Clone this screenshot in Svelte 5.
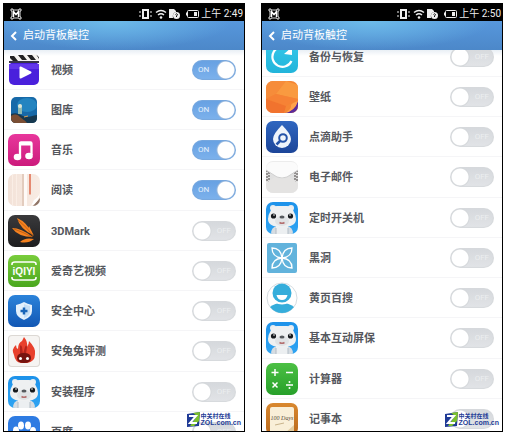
<script>
  // Each phone shows one scroll position of the same settings list
  let phones = $state([
    {
      id: 'a',
      time: '2:49',
      scrolled: false,
      apps: [
        { name: '视频', icon: 'video', on: true },
        { name: '图库', icon: 'gallery', on: true },
        { name: '音乐', icon: 'music', on: true },
        { name: '阅读', icon: 'reader', on: true },
        { name: '3DMark', icon: 'mark', on: false },
        { name: '爱奇艺视频', icon: 'qiyi', on: false },
        { name: '安全中心', icon: 'shield', on: false },
        { name: '安兔兔评测', icon: 'antutu', on: false },
        { name: '安装程序', icon: 'bear', on: false },
        { name: '百度', icon: 'paw', on: false }
      ]
    },
    {
      id: 'b',
      time: '2:50',
      scrolled: true,
      apps: [
        { name: '备份与恢复', icon: 'backup', on: false },
        { name: '壁纸', icon: 'wallpaper', on: false },
        { name: '点滴助手', icon: 'drop', on: false },
        { name: '电子邮件', icon: 'mail', on: false },
        { name: '定时开关机', icon: 'bear', on: false },
        { name: '黑洞', icon: 'hole', on: false },
        { name: '黄页百搜', icon: 'pages', on: false },
        { name: '基本互动屏保', icon: 'bear', on: false },
        { name: '计算器', icon: 'calc', on: false },
        { name: '记事本', icon: 'notes', on: false }
      ]
    }
  ]);
</script>

{#snippet appIcon(kind)}
  <svg class="icon {kind}" viewBox="0 0 32 32" aria-hidden="true">
    {#if kind === 'video'}
      <rect x="1" y="8" width="30" height="23" rx="5" fill="#4a20dc" />
      <path d="M1 10h30v5H1z" fill="#6236ea" />
      <path d="M2 2 30 0 31 6 2 8z" fill="#f4f2ee" />
      <path d="M2 2h4l4 5H5L2 4zM10 1h5l4 5h-5zM19 1h5l4 5h-5zM28 0l3 1v4z" fill="#222" />
      <path d="M1 7h30v2H1z" fill="#38344a" />
      <path d="M12.500 13.500v10L22.500 18.500z" fill="#fff" stroke="#fff" stroke-width="2" stroke-linejoin="round" />
    {:else if kind === 'gallery'}
      <rect x="3" y="3" width="26" height="26" rx="5" fill="#1769a8" />
      <ellipse cx="19" cy="11" rx="10" ry="7" fill="#2484c0" />
      <path d="M3 20c5-2 8 0 12 2s8 0 14-1v3q0 5-5 5H8q-5 0-5-5z" fill="#16384f" />
      <path d="M3 22c5-3 7-1 9 1s5 3 7 6H8q-5 0-5-5z" fill="#7a4e34" />
      <path d="M10 12q2-3 4 0v8h-4z" fill="#8fbab4" />
      <circle cx="12" cy="12" r="2" fill="#dde6d8" />
      <path d="m16 23 4-1" stroke="#e0a050" />
    {:else if kind === 'music'}
      <path d="M12 22V9.500q0-1 1-1h9.500q1 0 1 1V21" fill="none" stroke="#fff" stroke-width="2.300" />
      <path d="M11 8h13v3.500H11z" fill="#fff" />
      <ellipse cx="9.500" cy="23" rx="3.800" ry="3.200" fill="#fff" />
      <ellipse cx="21" cy="22" rx="3.800" ry="3.200" fill="#fff" />
    {:else if kind === 'reader'}
      <path d="M14 0h2v32h-2z" fill="#dcc0b0" opacity=".7" />
      <path d="M16 0h3v32h-3z" fill="#fffaf7" />
      <path d="M8 0h1v32H8zM4 0h1v32H4z" fill="#faeee6" />
      <path d="M21 0h2v20l-1 1-1-1z" fill="#e58a72" />
      <path d="M32 24 25 32h7z" fill="#8f7466" />
      <path d="M32 19q-1 9-9 13l3-6q4-2 6-7z" fill="#fff" />
    {:else if kind === 'mark'}
      <g fill="#f58220">
        <path d="M9 3q10 4 16 17Q12 14 9 3z" />
        <path d="M4 13q9 0 21 9Q10 22 4 13z" />
        <path d="M12 27q5-5 14-3-6 5-14 3z" />
        <path d="m21 11 5 10-6-6z" />
      </g>
      <path d="M10 5q9 7 15 16M6 14q9 3 18 8" fill="none" stroke="#b4550c" stroke-width=".7" />
    {:else if kind === 'qiyi'}
      <g fill="none" stroke="#fff" stroke-width="1.600">
        <path d="M4 10V9q0-2 3-2h18q3 0 3 2v1M4 22v1q0 2 3 2h18q3 0 3-2v-1" />
      </g>
      <text x="16" y="20" text-anchor="middle">iQIYI</text>
    {:else if kind === 'shield'}
      <path d="M16 7q3.500 2 8 3v6q0 6-8 9-8-3-8-9v-6q4.500-1 8-3z" fill="#e3f0fc" />
      <path d="M16 9q3 1.500 6 2v5q0 4.500-6 7z" fill="#c5def5" />
      <path d="M16 12.500v7M12.500 16h7" stroke="#1965b8" stroke-width="2.500" />
    {:else if kind === 'antutu'}
      <path d="M6 20Q3 14 8 10q0 3 2 4 0-6 4-8l2-4q4 5 3 10 2-3 2-6 7 7 6 13 0 8-8 9h-6q-6-1-7-8z" fill="#e8402c" />
      <path d="M12 19V11q1-2 2 1l1 7 2-7q1-3 2 0l-1 7z" fill="#b3231b" />
      <path d="M9 23q0-5 7-5t7 5q0 5-7 5t-7-5z" fill="#76130f" />
      <circle cx="12.500" cy="23.500" r="1.500" fill="#fff" />
      <circle cx="19.500" cy="23.500" r="1.500" fill="#fff" />
    {:else if kind === 'bear'}
      <path d="M5 32q0-7 6-8h10q6 1 6 8z" fill="#d5dce2" />
      <path d="M10 24h12v8H10z" fill="#eceff1" />
      <path d="M10 26v6M22 26v6" stroke="#b2bcc5" />
      <circle cx="7" cy="6" r="3" fill="#e9edf0" />
      <circle cx="25" cy="6" r="3" fill="#e9edf0" />
      <path d="M5 8q1-4 6-4h10q5 0 6 4 3 5 3 9 0 8-14 8T2 17q0-4 3-9z" fill="#eef0f1" />
      <ellipse cx="16" cy="19" rx="7" ry="5" fill="#e0e3e5" />
      <circle cx="7.500" cy="14" r="2.600" fill="#15191d" />
      <circle cx="24.500" cy="14" r="2.600" fill="#15191d" />
      <circle cx="8" cy="13" r=".8" fill="#fff" />
      <circle cx="24" cy="13" r=".8" fill="#fff" />
      <ellipse cx="16" cy="15" rx="2.500" ry="1.600" fill="#55595d" />
      <path d="M13.500 20.500q2.500 1.500 5 0" fill="none" stroke="#b46f6f" stroke-width="1.500" />
    {:else if kind === 'paw'}
      <g fill="#fff">
        <ellipse cx="8" cy="14.500" rx="3" ry="4" />
        <ellipse cx="13" cy="9.500" rx="3" ry="4" />
        <ellipse cx="20" cy="9.500" rx="3" ry="4" />
        <ellipse cx="25" cy="15" rx="3" ry="4" />
        <path d="M16 15q3 0 5 4 5 3 4 7-2 4-9 3-7 1-9-3-1-4 4-7 2-4 5-4z" />
      </g>
    {:else if kind === 'backup'}
      <path d="M22 7.500A10 10 0 1 0 25.500 20" fill="none" stroke="#fff" stroke-width="2.200" />
      <path d="M26 6v8l-8-1z" fill="#fff" />
    {:else if kind === 'wallpaper'}
      <path d="M0 0h20L10 13 0 18z" fill="#f68c3a" />
      <path d="m20 0 12 4v14L10 13z" fill="#f99a40" />
      <path d="m10 13 22 5-12 7L0 18z" fill="#f68235" />
      <path d="m0 18 20 7-2 7H0z" fill="#f1732e" />
      <path d="M32 20v12H19q9-2 13-12z" fill="#5b2b9a" />
      <path d="M32 20q-6 2-7 4 1 4-6 8 10-2 13-12z" fill="#ffa24c" />
    {:else if kind === 'drop'}
      <path d="M16 4q9 9 9 14a9 9 0 0 1-18 0q0-5 9-14z" fill="#eef4fb" />
      <circle cx="17" cy="17" r="3.800" fill="none" stroke="#2453a8" stroke-width="2" />
      <path d="m14 20-3.500 3.500" stroke="#2453a8" stroke-width="2.500" />
    {:else if kind === 'mail'}
      <path d="M0 9v12h32V9z" fill="#e0e0e0" />
      <path d="M1 9v12M3 11v10M31 9v12M29 11v10" stroke="#7b7776" stroke-width="1.500" stroke-dasharray="2 1" />
      <path d="M0 9q0-8 7-8h18q7 0 7 8l-11 7q-5 2-10 0z" fill="#fbfbfb" />
      <path d="m0 9 11 7q5 2 10 0l11-7" fill="none" stroke="#cfcfcf" />
      <path d="m0 22 9-6q7 3 14 0l9 6v10H0z" fill="#e4e3e2" />
    {:else if kind === 'hole'}
      <rect x="1" y="1" width="30" height="30" rx="2" fill="#62b3dc" />
      <g fill="none" stroke="#fff" stroke-width="1.300">
        <path d="M16 16Q6 15 6 6q9 0 10 10zM16 16Q26 15 26 6q-9 0-10 10zM16 16Q6 17 6 26q9 0 10-10zM16 16q10 1 10 10-9 0-10-10z" />
      </g>
    {:else if kind === 'pages'}
      <circle cx="16" cy="16" r="15" fill="#fff" stroke="#d5dce0" />
      <path d="M4 25q5-4 12-4t12 4q-5 6-12 6T4 25z" fill="#35addb" />
      <circle cx="16" cy="12" r="10.500" fill="#fff" />
      <circle cx="16" cy="11" r="9.500" fill="#35addb" />
      <path d="M10.500 13h11q-1 5-5.500 5t-5.500-5z" fill="#fff" />
    {:else if kind === 'calc'}
      <g stroke="#fff" stroke-width="1.500">
        <path d="M9 6v7M5.500 9.500h7M20 9.500h7M6.500 19.500l5 5M11.500 19.500l-5 5M20 22h7" />
      </g>
      <circle cx="23.500" cy="19" r="1" fill="#fff" />
      <circle cx="23.500" cy="25" r="1" fill="#fff" />
    {:else if kind === 'notes'}
      <rect x="4" y="4" width="24" height="27" rx="2" fill="#f9efd8" />
      <text x="16" y="17" text-anchor="middle">100 Days</text>
      <path d="m9 22 9-2" stroke="#c9b48c" />
      <path d="m18 31 10-9v9z" fill="#e3cda0" />
    {/if}
  </svg>
{/snippet}

<main class="page">
  {#each phones as phone (phone.id)}
    <section class="phone">
      <div class="status">
        <svg class="notice" viewBox="0 0 12 12" aria-hidden="true">
          <path d="M1 1h2v1h6V1h2v2h-1v6h1v2H9v-1H3v1H1V9h1V3H1z" fill="none" stroke="#ddd" />
          <path d="M3.500 9V3.500L6 6.500l2.500-3V9" fill="none" stroke="#fff" stroke-width="1.500" />
        </svg>
        <svg class="glyphs" viewBox="0 0 60 12" aria-hidden="true">
          <g fill="none" stroke="#eee">
            <rect x="4" y="2" width="5" height="8" stroke-width="2" />
            <path d="M1 3v2M1 7v2M12 3v2M12 7v2" />
            <path d="M17 4.500q5-4 10 0M19 7q3-2.500 6 0" stroke-width="1.500" />
            <rect x="48.500" y="2.500" width="11" height="7" rx="1" />
          </g>
          <circle cx="22" cy="9.500" r="1.300" fill="#eee" />
          <path d="M30 1h5l2 2v1q-4 1-3 6h-4z" fill="#eee" />
          <circle cx="37.500" cy="7.500" r="3.500" fill="#eee" />
          <path d="M36.500 6.500q1-1.500 2 0l-1 1.500v1" fill="none" stroke="#111" />
          <path d="M47 4.500h1v3h-1zM55 4h3v4h-3z" fill="#eee" />
        </svg>
        <span class="time">上午 {phone.time}</span>
      </div>

      <header class="title-bar">
        <button class="back" type="button">
          <svg viewBox="0 0 8 10" aria-hidden="true">
            <path d="M6 1 2 5l4 4" fill="none" stroke="#fff" stroke-width="2" />
          </svg>
          启动背板触控
        </button>
      </header>

      <div class="list" class:scrolled={phone.scrolled}>
        {#each phone.apps as app, i (i)}
          <label class="row">
            {@render appIcon(app.icon)}
            <span class="name">{app.name}</span>
            <span class="switch" class:on={app.on}>
              <input type="checkbox" bind:checked={app.on} />
              <span class="word" aria-hidden="true">{app.on ? 'ON' : 'OFF'}</span>
            </span>
          </label>
        {/each}
      </div>

      <!-- site stamp, lies over the last row -->
      <div class="stamp">
        <svg viewBox="0 0 15 15" aria-hidden="true">
          <path d="M1 2 14 0 13 14 1 15z" fill="#203b96" />
          <path d="M7 1 14 0l-1 9-5 5H4l7-10z" fill="#7cc12c" />
          <path d="M3 4h7L4 11h7" fill="none" stroke="#fff" stroke-width="2" />
        </svg>
        <div class="stamp-text">
          <span class="stamp-cn">中关村在线</span>
          <span class="stamp-url">ZOL.com.cn</span>
        </div>
      </div>
    </section>
  {/each}
</main>

<style>
  :global(body) { background: #fff; }

  .page {
    display: flex; gap: 16px; height: 100vh; padding: 3px; box-sizing: border-box;
    font-family: Roboto, "Noto Sans CJK SC", sans-serif; font-size: 11px; color: #55575d;
  }

  .phone {
    position: relative; flex: 1; min-width: 0; display: flex; flex-direction: column;
    box-sizing: border-box; border: 1px solid #000; background: #fff; overflow: hidden;
  }

  /* STATUS BAR */
  .status { flex: none; display: flex; align-items: center; height: 17px; padding: 2px 1px 0 6px; box-sizing: border-box; background: #000; color: #eee; }
  .notice { width: 12px; height: 12px; margin-right: auto; }
  .glyphs { width: 60px; height: 12px; margin-right: 2px; }
  .time { font-size: 10px; line-height: 14px; white-space: pre; }

  /* TITLE */
  .title-bar {
    flex: none; display: flex; align-items: center; height: 29px; padding: 0 6px;
    background: radial-gradient(ellipse 50% 100% at 45% 0, #6dbbe9, transparent), linear-gradient(#5797dc, #4c88c9);
  }
  .back { display: flex; align-items: center; gap: 5px; padding: 0; border: none; background: none; color: #fff; font: inherit; line-height: 16px; cursor: pointer; }
  .back svg { width: 8px; height: 10px; }

  /* LIST */
  .list { flex: 1; min-height: 0; overflow: hidden; background: linear-gradient(#e9eff5, #fff 6px); }
  .scrolled .row:first-child { margin-top: -13px; }
  .row { display: flex; align-items: center; height: 40px; padding: 0 8px 0 4px; box-sizing: border-box; border-bottom: 1px solid #f5f5f7; cursor: pointer; }
  .row:nth-child(4n) { height: 41px; }
  .name { flex: 1; padding-top: 2px; margin-left: 11px; font-weight: bold; line-height: 16px; white-space: nowrap; }

  /* SWITCH */
  .switch { display: grid; align-items: center; width: 44px; height: 20px; }
  .switch input, .word { grid-area: 1 / 1; }
  .switch input {
    appearance: none; width: 44px; height: 20px; margin: 0; border-radius: 10px; cursor: pointer;
    background: radial-gradient(circle at 10px 10px, #fff 8px, #d4d7da 9px, transparent 10px), linear-gradient(#d5d8dc, #e2e4e7);
    box-shadow: inset 0 0 1px 1px #d6d9dc;
  }
  .switch.on input {
    background: radial-gradient(circle at 34px 10px, #fff 8px, #9bb9dc 9px, transparent 10px), linear-gradient(#66a0e2, #7db2ec);
    box-shadow: inset 0 0 1px 1px #78a8de;
  }
  .word { justify-self: end; padding-right: 5px; font-size: 8px; line-height: 10px; color: #eceef0; pointer-events: none; }
  .on .word { justify-self: start; padding: 0 0 0 6px; color: #e6f0fb; }

  /* ICONS */
  .icon { flex: none; width: 32px; height: 32px; border-radius: 7px; overflow: hidden; }
  .music { background: linear-gradient(#e8379c, #cc1a7c); }
  .reader { background: linear-gradient(90deg, #f3e2d8, #f8ece4); }
  .mark { background: linear-gradient(#3a3a3c, #1d1d1f); }
  .qiyi { background: linear-gradient(#79cc3c, #4aa71e); }
  .qiyi text { font: bold 10px "Liberation Sans", sans-serif; fill: #fff; }
  .shield { background: linear-gradient(#2b83da, #1257b4); }
  .antutu { background: #f6f4f2; box-shadow: inset 0 0 0 1px #dcd8d4; border-radius: 4px; }
  .bear { background: linear-gradient(#1d92ea, #2fa4f2); }
  .paw { background: #2e7be2; }
  .backup { background: linear-gradient(#35c8ea, #22b4da); }
  .wallpaper { background: #f58634; }
  .drop { background: linear-gradient(#2f66c0, #1c4599); }
  .mail { background: #ececec; }
  .hole, .pages, .gallery { border-radius: 0; }
  .calc { background: linear-gradient(#4cc044, #27a02a); }
  .notes { background: linear-gradient(#d9882f, #b9691c); }
  .notes text { font: italic 6px "Liberation Serif", serif; fill: #5a4a3a; }

  /* STAMP */
  .stamp { position: absolute; right: 3px; bottom: 4px; display: flex; align-items: center; color: #1f3d97; pointer-events: none; }
  .stamp svg { width: 15px; height: 15px; }
  .stamp-text { display: flex; flex-direction: column; font-weight: bold; }
  .stamp-cn { font-size: 6px; line-height: 7px; }
  .stamp-url { font-family: "Liberation Sans", sans-serif; font-size: 7px; line-height: 8px; }
</style>
